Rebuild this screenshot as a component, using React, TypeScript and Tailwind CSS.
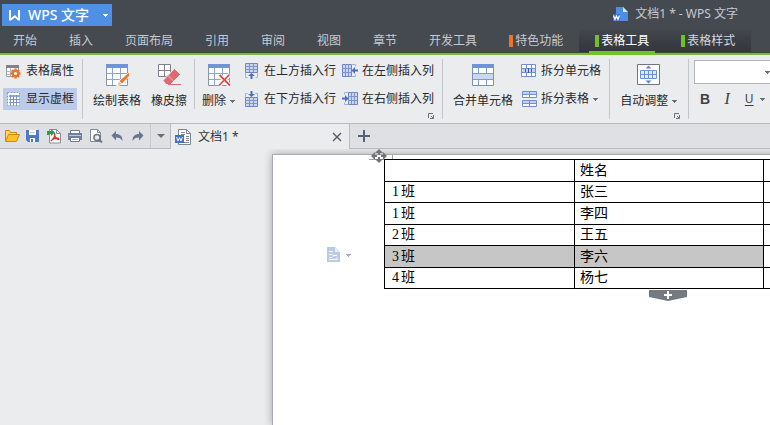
import type { ReactNode } from 'react';
import clsx from 'clsx';

const menuTabs = ['开始', '插入', '页面布局', '引用', '审阅', '视图', '章节', '开发工具'];

const rows = [
  { num: '', unit: '', name: '姓名' },
  { num: '1', unit: '班', name: '张三' },
  { num: '1', unit: '班', name: '李四' },
  { num: '2', unit: '班', name: '王五' },
  { num: '3', unit: '班', name: '李六', selected: true },
  { num: '4', unit: '班', name: '杨七' },
];

const Caret = ({ className = 'text-[#6b6f78]' }: { className?: string }) => (
  <svg width="5" height="3" viewBox="0 0 5 3" className={clsx('shrink-0', className)} shapeRendering="crispEdges">
    <path d="M0 0h5v1H4v1H3v1H2V2H1V1H0z" fill="currentColor" />
  </svg>
);

/* ---------- small ribbon icons, 16x16 ---------- */

const PropsIcon = () => (
  <svg width="16" height="16" viewBox="0 0 16 16">
    <path d="M.5 2.5h12v11H.5z" fill="#fff" stroke="#9a9eaa" />
    <path d="M0 2h13v3H0z" fill="#80838f" />
    <path d="M1 8.5h6M1 11.5h4M4.5 5v8" stroke="#b5b8c2" />
    <g stroke="#e8752a" strokeWidth="2.4">
      <path d="M9.5 5.5v10M4.5 10.5h10M6 7l7 7M13 7l-7 7" />
    </g>
    <circle cx="9.5" cy="10.5" r="3.8" fill="#e8752a" />
    <circle cx="9.5" cy="10.5" r="1.6" fill="#fff" />
  </svg>
);

const GridlinesIcon = () => (
  <svg width="16" height="16" viewBox="0 0 16 16">
    <path d="M1 1h13v14H1z" fill="#fff" />
    <path d="M1.5 1.5h12v13h-12z" fill="none" stroke="#8b93ab" strokeDasharray="2 1" />
    <path d="M3 4h11v2H3z" fill="#8fa9dc" />
    <path d="M4.5 4v10M7.500 4v10M10.500 4v10M3 8.500h10M3 11.500h10" stroke="#7b93c9" />
  </svg>
);

const RowAboveIcon = () => (
  <svg width="16" height="16" viewBox="0 0 16 16">
    <path d="M1.5.5h12v9h-12z" fill="#c7d5f0" stroke="#6d86bd" />
    <path d="M5.5 0v9M9.5 0v9M1 3.500h12M1 6.500h12" stroke="#7d95ca" />
    <path d="M1.5 10v4.500h2M13.5 10v4.500h-2" fill="none" stroke="#9fb2dc" />
    <path d="M7.500 10 4 13h2.500v3h2v-3H11z" fill="#4a6fc4" />
  </svg>
);

const RowBelowIcon = () => (
  <svg width="16" height="16" viewBox="0 0 16 16">
    <path d="M1.5 6.500h12v9h-12z" fill="#c7d5f0" stroke="#6d86bd" />
    <path d="M5.5 6v9M9.5 6v9M1 9.500h12M1 12.500h12" stroke="#7d95ca" />
    <path d="M1.5 6V2.500h2M13.5 6V2.500h-2" fill="none" stroke="#9fb2dc" />
    <path d="M7.500 6 4 3h2.500V0h2v3H11z" fill="#4a6fc4" />
  </svg>
);

const ColLeftIcon = () => (
  <svg width="16" height="16" viewBox="0 0 16 16">
    <path d="M.5 1.500h9v12h-9z" fill="#c7d5f0" stroke="#6d86bd" />
    <path d="M3.500 1v12M6.500 1v12M0 5.500h9M0 9.500h9" stroke="#7d95ca" />
    <path d="M10 1.500h3.500v2M10 13.500h3.500v-2" fill="none" stroke="#9fb2dc" />
    <path d="M9.500 7.500 13 4v2.500h3v2h-3V11z" fill="#4a6fc4" />
  </svg>
);

const ColRightIcon = () => (
  <svg width="16" height="16" viewBox="0 0 16 16">
    <path d="M6.500 1.500h9v12h-9z" fill="#c7d5f0" stroke="#6d86bd" />
    <path d="M9.500 1v12M12.500 1v12M6 5.500h9M6 9.500h9" stroke="#7d95ca" />
    <path d="M6 1.500H2.500v2M6 13.500H2.500v-2" fill="none" stroke="#9fb2dc" />
    <path d="M6.500 7.500 3 4v2.500H0v2h3V11z" fill="#4a6fc4" />
  </svg>
);

const SplitCellIcon = () => (
  <svg width="16" height="16" viewBox="0 0 16 16">
    <path d="M.5 1.500h14v12H.5z" fill="#fff" stroke="#6f8fd0" />
    <path d="M1 5h13v5H1z" fill="#c3d2f0" />
    <path d="M.5 5.500h14M.5 9.500h14M5.500 1v4M10.500 1v4M5.500 10v4M10.500 10v4" stroke="#6f8fd0" />
    <path d="M4.500 6v3M7.500 5v5M10.500 6v3" stroke="#3f5a99" />
  </svg>
);

const SplitTableIcon = () => (
  <svg width="16" height="16" viewBox="0 0 16 16">
    <path d="M1.500.5h14v6h-14zM1.500 9.500h14v6h-14z" fill="#fff" stroke="#6f8fd0" />
    <path d="M2 1h13v2H2zM2 10h13v2H2z" fill="#c3d2f0" />
    <path d="M1 3.500h14M1 12.500h14M8.500 0v6M8.500 10v6" stroke="#6f8fd0" />
  </svg>
);

/* ---------- large ribbon icons, 24x24 ---------- */

const TableBase = () => (
  <>
    <path d="M1.500 1.500h21v21h-21z" fill="#fff" stroke="#8b93b0" />
    <path d="M1 1h22v4H1z" fill="#6f94d8" />
    <path d="M7.500 5v17M15.500 5v17M2 10.500h20M2 16.500h20" stroke="#8ba4d8" />
  </>
);

const DrawTableIcon = () => (
  <svg width="24" height="24" viewBox="0 0 24 24">
    <TableBase />
    <path d="m24 9-11 9-2 5.500 5-1.500 8-8z" fill="#fff" />
    <path d="M24 9.500 14.500 18l2.500 2.500 7-7.500z" fill="#ea7a2c" />
    <path d="m14 18.500-1.500 4 4-1.500z" fill="#f5b98a" />
  </svg>
);

const EraserIcon = () => (
  <svg width="24" height="24" viewBox="0 0 24 24">
    <path d="M1.500 1.500h12v12h-12z" fill="#fff" stroke="#80838f" />
    <path d="M7.500 1v13M1 7.500h13" stroke="#80838f" />
    <path d="m17.500 5.500 6 6-10 10H9l-3-4z" fill="#df6b72" stroke="#ebecee" />
    <path d="m10.500 12 6 6" stroke="#f2b9bc" />
    <path d="M11 21.500h13" stroke="#df6b72" />
  </svg>
);

const DeleteIcon = () => (
  <svg width="24" height="24" viewBox="0 0 24 24">
    <TableBase />
    <path d="m12 12 11 11M23 11.500 12 22.500" stroke="#fff" strokeWidth="4" />
    <path d="m12.500 12 10.500 10.500M22.500 11.500 12 22.500" stroke="#dc4a4e" strokeWidth="1.800" />
  </svg>
);

const MergeIcon = () => (
  <svg width="24" height="24" viewBox="0 0 24 24">
    <path d="M1.500 1.500h21v21h-21z" fill="#fff" stroke="#7d8fc0" />
    <path d="M1 1h22v4H1z" fill="#6f94d8" />
    <path d="M2 11h20v5H2z" fill="#cbd8f1" />
    <path d="M7.500 5v5M15.500 5v5M7.500 17v5M15.500 17v5M2 10.500h20M2 16.500h20" stroke="#7d9ad6" />
  </svg>
);

const AutoFitIcon = () => (
  <svg width="24" height="24" viewBox="0 0 24 24">
    <path d="M.5 1.500h22v20H.5z" fill="#fff" stroke="#74747f" />
    <path d="M3.500 7.500h16v8h-16z" fill="#e3ebf8" stroke="#6f8fd0" />
    <path d="M7.500 7v9M11.500 7v9M15.500 7v9M3 11.500h17" stroke="#6f8fd0" />
    <path d="m11.500 2.500 3 3h-6zM11.500 20.500l3-3h-6z" fill="#5f84cd" />
  </svg>
);

/* ---------- quick access icons ---------- */

const OpenIcon = () => (
  <svg width="16" height="16" viewBox="0 0 16 16">
    <path d="M1.500 13V2.500h4l1 2h6V7" fill="#f9d56e" stroke="#c98a14" />
    <path d="m1.500 13.500 3-7h11l-3 7z" fill="#fbc22c" stroke="#c98a14" />
  </svg>
);

const SaveIcon = () => (
  <svg width="16" height="16" viewBox="0 0 16 16">
    <path d="M1 2h13v12H3l-2-2z" fill="#4f79c4" />
    <path d="M4 2h7v5H4zM5 10h5v4H5z" fill="#fff" />
    <path d="M5 4.500h5" stroke="#c6d2ea" />
    <path d="M6 11h2v3H6z" fill="#4f79c4" />
  </svg>
);

const PdfIcon = () => (
  <svg width="16" height="16" viewBox="0 0 16 16">
    <path d="M3.500 1.500h7l4 4v9.500h-11z" fill="#fff" stroke="#8a8f9b" />
    <path d="M10.500 1.500v4h4" fill="none" stroke="#8a8f9b" />
    <path d="M8.500 5c1 3-1 6-3.500 8M8.500 7.500c1 2.500 3 4 5 4M6 11.500c2-1 4.500-1.500 7-1" fill="none" stroke="#df2f2f" strokeWidth="1.400" />
    <path d="M1 5V3h4V1l4 3.500L5 8V6H3v1H1z" fill="#2f9a4a" />
  </svg>
);

const PrintIcon = () => (
  <svg width="16" height="16" viewBox="0 0 16 16">
    <path d="M3.500 2.500h9v3h-9z" fill="#fff" stroke="#707b92" />
    <path d="M1 5h14v7H1z" fill="#707f9e" />
    <path d="M2 7.500h12" stroke="#bcc5d6" />
    <path d="M3.500 9.500h9v4h-9z" fill="#fff" stroke="#707b92" />
    <path d="M5 11.500h6" stroke="#a9b1c1" />
  </svg>
);

const PreviewIcon = () => (
  <svg width="16" height="16" viewBox="0 0 16 16">
    <path d="M2.500 1.500h7l3 3v9h-10z" fill="#fff" stroke="#848996" />
    <path d="M9.500 1.500v3h3" fill="none" stroke="#848996" />
    <circle cx="9" cy="9.500" r="3" fill="#e9eef5" stroke="#6d7381" strokeWidth="1.500" />
    <path d="m11 11.500 3 3" stroke="#6d7381" strokeWidth="1.800" />
  </svg>
);

const UndoIcon = () => (
  <svg width="16" height="16" viewBox="0 0 16 16">
    <path d="M7 3v3c4 0 6.500 2 6.500 7-1.500-2.500-3-3.500-6.500-3.500v3L2.500 7.500z" fill="#687590" />
  </svg>
);

const RedoIcon = () => (
  <svg width="16" height="16" viewBox="0 0 16 16">
    <path d="M9 3v3C5 6 2.500 8 2.500 13 4 10.500 5.500 9.500 9 9.500v3l4.500-5z" fill="#687590" />
  </svg>
);

const DocTabIcon = () => (
  <svg width="16" height="16" viewBox="0 0 16 16">
    <path d="M3.500.5h8l4 4v11h-12z" fill="#fff" stroke="#7f8693" />
    <path d="M11.500.5v4h4M6 3.500h4M6 5.500h4M11 7.500h3M11 9.500h3M11 11.500h3M6 13.500h8" fill="none" stroke="#7f8693" />
    <path d="M0 6h9v8H0z" fill="#3f73c4" />
    <path d="m1.500 8 1.500 4 1.500-3.500L6 12l1.500-4" fill="none" stroke="#fff" />
  </svg>
);

const TitleIcon = () => (
  <svg width="16" height="16" viewBox="0 0 16 16">
    <path d="M3 1h7l5 5v9H3z" fill="#4b8fe3" />
    <path d="M10 1v5h5z" fill="#d6e6fb" />
    <path d="M0 8h7v7H0z" fill="#3a77cb" />
    <path d="m.5 9.500 1.500 4 1.500-3.500L5 13.500l1.500-4" fill="none" stroke="#fff" strokeWidth="1.200" />
  </svg>
);

const quickActions = [
  { label: '打开', icon: <OpenIcon /> },
  { label: '保存', icon: <SaveIcon /> },
  { label: '输出为PDF', icon: <PdfIcon /> },
  { label: '打印', icon: <PrintIcon /> },
  { label: '打印预览', icon: <PreviewIcon /> },
  { label: '撤销', icon: <UndoIcon /> },
  { label: '恢复', icon: <RedoIcon /> },
];

/* ---------- ribbon parts ---------- */

const Divider = ({ short = false }: { short?: boolean }) => (
  <div className={clsx('w-px shrink-0 bg-[#c3c5ca]', short && 'mb-[10px]')} />
);

const Launcher = () => (
  <button aria-label="更多设置" className="absolute bottom-0 right-2">
    <svg width="6" height="6" viewBox="0 0 6 6" className="block">
      <path d="M.5 5V.5H5M5.500 2v3.500H2M3 3l2 2" fill="none" stroke="#6b6f78" />
    </svg>
  </button>
);

type ButtonProps = { icon: ReactNode; label: string; caret?: boolean };

const BigButton = ({ icon, label, caret }: ButtonProps) => (
  <button className="flex shrink-0 flex-col items-center gap-[6px] self-start pt-1">
    {icon}
    <span className="flex items-center gap-1 leading-4">
      {label}
      {caret && <Caret />}
    </span>
  </button>
);

const SmallButton = ({ icon, label, caret, active }: ButtonProps & { active?: boolean }) => (
  <button className={clsx('flex h-[22px] shrink-0 items-center gap-1 leading-4', active && 'bg-[#bccbea] pr-[3px]')}>
    {icon}
    {label}
    {caret && <Caret />}
  </button>
);

const Stack = ({ children }: { children: ReactNode }) => (
  <div className="flex shrink-0 flex-col gap-[6px] pt-px">{children}</div>
);

const ContextTab = ({ label, active }: { label: string; active?: boolean }) => (
  <button className={clsx('relative flex h-full shrink-0 items-center gap-[2px]', active ? 'text-white' : 'text-[#d3d6dc]')}>
    <span className="h-3 w-1 bg-[#6fc31f]" />
    {label}
    {active && <span className="absolute -inset-x-[6px] -bottom-[3px] h-1 bg-[#72c424]" />}
  </button>
);

const Header = () => (
  <header className="shrink-0 border-b-2 border-[#7ab648] bg-[#454950]">
    <div className="flex h-[30px] items-start justify-between pl-[2px] pr-8 pt-1">
      <button className="flex h-[22px] w-[110px] items-center bg-[#4f90e4] pl-[6px] pr-1 text-sm font-medium text-white">
        <svg width="14" height="14" viewBox="0 0 14 14">
          <path d="M1 2h2v8l4-3 3 3V2h2v10.500h-2L7 9.500l-4 3H1z" fill="#fff" />
        </svg>
        <span className="flex-1 pl-[6px] text-left">WPS 文字</span>
        <Caret className="text-white" />
      </button>
      <div className="flex h-5 items-center gap-[6px] text-[#c6c9cf]">
        <TitleIcon />
        <h1>文档1 * - WPS 文字</h1>
      </div>
    </div>
    <nav className="flex h-[23px] border-b border-[#33501d] pl-[13px] text-[#c6c9cf]">
      {menuTabs.map((tab) => (
        <button key={tab} className="shrink-0 pr-8">
          {tab}
        </button>
      ))}
      <button className="flex shrink-0 items-center gap-[2px] pr-4">
        <span className="h-3 w-1 bg-[#e8752a]" />
        特色功能
      </button>
      <div className="flex shrink-0 gap-8 bg-linear-to-b from-[#42464d] to-[#33363c] px-4">
        <ContextTab label="表格工具" active />
        <ContextTab label="表格样式" />
      </div>
    </nav>
  </header>
);

const Ribbon = () => (
  <div className="flex h-[69px] shrink-0 overflow-hidden border-b border-[#b9bbc0] bg-[#ebecee] py-1 text-[#26282d]">
    <div className="flex shrink-0 pl-[3px] pr-[5px]">
      <Stack>
        <SmallButton icon={<span className="pl-[3px]"><PropsIcon /></span>} label="表格属性" />
        <SmallButton icon={<span className="pl-[3px]"><GridlinesIcon /></span>} label="显示虚框" active />
      </Stack>
    </div>
    <Divider />
    <div className="flex shrink-0 gap-[10px] pl-[10px] pr-[7px]">
      <BigButton icon={<DrawTableIcon />} label="绘制表格" />
      <BigButton icon={<EraserIcon />} label="橡皮擦" />
    </div>
    <Divider short />
    <div className="relative flex shrink-0 pl-[7px] pr-2">
      <BigButton icon={<DeleteIcon />} label="删除" caret />
      <div className="flex gap-[6px] pl-[9px]">
        <Stack>
          <SmallButton icon={<RowAboveIcon />} label="在上方插入行" />
          <SmallButton icon={<RowBelowIcon />} label="在下方插入行" />
        </Stack>
        <Stack>
          <SmallButton icon={<ColLeftIcon />} label="在左侧插入列" />
          <SmallButton icon={<ColRightIcon />} label="在右侧插入列" />
        </Stack>
      </div>
      <Launcher />
    </div>
    <Divider />
    <div className="flex shrink-0 gap-2 pl-[10px] pr-2">
      <BigButton icon={<MergeIcon />} label="合并单元格" />
      <Stack>
        <SmallButton icon={<SplitCellIcon />} label="拆分单元格" />
        <SmallButton icon={<SplitTableIcon />} label="拆分表格" caret />
      </Stack>
    </div>
    <Divider />
    <div className="relative flex shrink-0 pl-[10px] pr-[11px]">
      <BigButton icon={<AutoFitIcon />} label="自动调整" caret />
      <Launcher />
    </div>
    <Divider />
    <div className="flex shrink-0 flex-col gap-1 pl-[5px] pt-px">
      <div className="relative flex items-center">
        <select aria-label="字体" className="h-6 w-20 appearance-none border border-[#b4b6bc] bg-white" />
        <span className="pointer-events-none absolute right-1">
          <Caret />
        </span>
      </div>
      <div className="flex h-[22px] items-center text-base text-[#3c3f46]">
        <button aria-label="加粗" className="w-[22px] font-['Liberation_Sans',sans-serif] text-sm font-bold">B</button>
        <button aria-label="倾斜" className="w-[22px] font-['Liberation_Serif',serif] italic">I</button>
        <button aria-label="下划线" className="w-[22px] text-xs underline underline-offset-2">U</button>
        <Caret />
      </div>
    </div>
  </div>
);

const TabStrip = () => (
  <div className="flex h-[25px] shrink-0 bg-[#ebecee] text-[#33363c]">
    <div className="flex shrink-0 items-center border-b border-r border-[#b9bbc0] bg-[#dfe0e4] pl-px">
      {quickActions.map(({ label, icon }) => (
        <button key={label} aria-label={label} className="flex w-[21px] justify-center">
          {icon}
        </button>
      ))}
      <button aria-label="自定义快速访问工具栏" className="ml-[2px] flex h-full w-5 items-center justify-center border-l border-[#c6c8cd]">
        <svg width="8" height="4" viewBox="0 0 8 4">
          <path d="M0 0h8L4 4z" fill="#6b6f78" />
        </svg>
      </button>
    </div>
    <div className="flex w-[178px] shrink-0 items-center pl-1 pr-[7px]">
      <DocTabIcon />
      <span className="flex-1 pl-[7px]">文档1 *</span>
      <button aria-label="关闭">
        <svg width="10" height="10" viewBox="0 0 10 10">
          <path d="m1 1 8 8M9 1 1 9" stroke="#555a66" strokeWidth="1.400" />
        </svg>
      </button>
    </div>
    <div className="flex flex-1 items-center border-b border-l border-[#b9bbc0] bg-[#dfe0e4] pl-2">
      <button aria-label="新建">
        <svg width="12" height="12" viewBox="0 0 12 12">
          <path d="M6 0v12M0 6h12" stroke="#5a5f74" strokeWidth="2" />
        </svg>
      </button>
    </div>
  </div>
);

const MoveHandle = () => (
  <svg width="24" height="14" viewBox="0 0 24 14" className="absolute -left-[15px] -top-[10px]">
    <path d="M0 10.500h15M23.500 5v5" stroke="#a4a6aa" />
    <path d="m10 0 4 4h-3v2H9V4H6zM10 14l4-4h-3V8H9v2H6zM2 7l4-4v3h2v2H6v3zM18 7l-4-4v3h-2v2h2v3z" fill="#6f757b" />
  </svg>
);

const Sheet = () => (
  <main className="flex flex-1 overflow-hidden bg-[#ebecee] pl-[272px] pt-[5px]">
    <div className="flex flex-1 border-l border-t border-[#a9abb0] bg-white shadow-[0_0_8px_rgba(0,0,0,0.3)]">
      <div className="flex w-[111px] shrink-0 items-start pl-[53px] pt-[92px]">
        <button aria-label="段落布局" className="flex items-center gap-[6px]">
          <svg width="14" height="16" viewBox="0 0 14 16">
            <path d="M1 0h8l5 5v10H1z" fill="#bccbe4" />
            <path d="M9 0v5h5z" fill="#e8eef8" />
            <path d="M3 4.500h4M3 7.500h3l1 1h4M3 10.500h3l1-1M3 12.500h8v-2" fill="none" stroke="#fff" />
          </svg>
          <Caret className="text-[#a9b0bd]" />
        </button>
      </div>
      <div className="relative mt-1 shrink-0 self-start">
        <table className="w-[570px] table-fixed border-collapse font-['Liberation_Serif','Noto_Sans_CJK_SC',serif] text-sm leading-4 text-black">
          <colgroup>
            <col className="w-[190px]" />
            <col className="w-[189px]" />
            <col />
          </colgroup>
          <tbody>
            {rows.map(({ num, unit, name, selected }, i) => (
              <tr key={i} className="odd:h-[22px] even:h-[21px]">
                <td className={clsx('border border-black py-0 pl-[7px]', selected && 'bg-[#c6c6c6]')}>
                  <span className="flex gap-[2px]">
                    <span>{num}</span>
                    <span>{unit}</span>
                  </span>
                </td>
                <td className={clsx('border border-black py-0 pl-[5px]', selected && 'bg-[#c6c6c6]')}>{name}</td>
                <td className="border border-black p-0" />
              </tr>
            ))}
          </tbody>
        </table>
        <MoveHandle />
        <button aria-label="添加行" className="absolute left-[265px] top-full pt-px">
          <svg width="38" height="11" viewBox="0 0 38 11" className="block">
            <path d="M0 0h38v7l-19 4L0 7z" fill="#737a82" />
            <path d="M19 1v8M15 5h8" stroke="#fff" strokeWidth="2" />
          </svg>
        </button>
      </div>
    </div>
  </main>
);

export default function App() {
  return (
    <div className="flex min-h-screen flex-col overflow-hidden whitespace-nowrap font-['Noto_Sans','Noto_Sans_CJK_SC',sans-serif] text-xs">
      <Header />
      <Ribbon />
      <TabStrip />
      <Sheet />
    </div>
  );
}
